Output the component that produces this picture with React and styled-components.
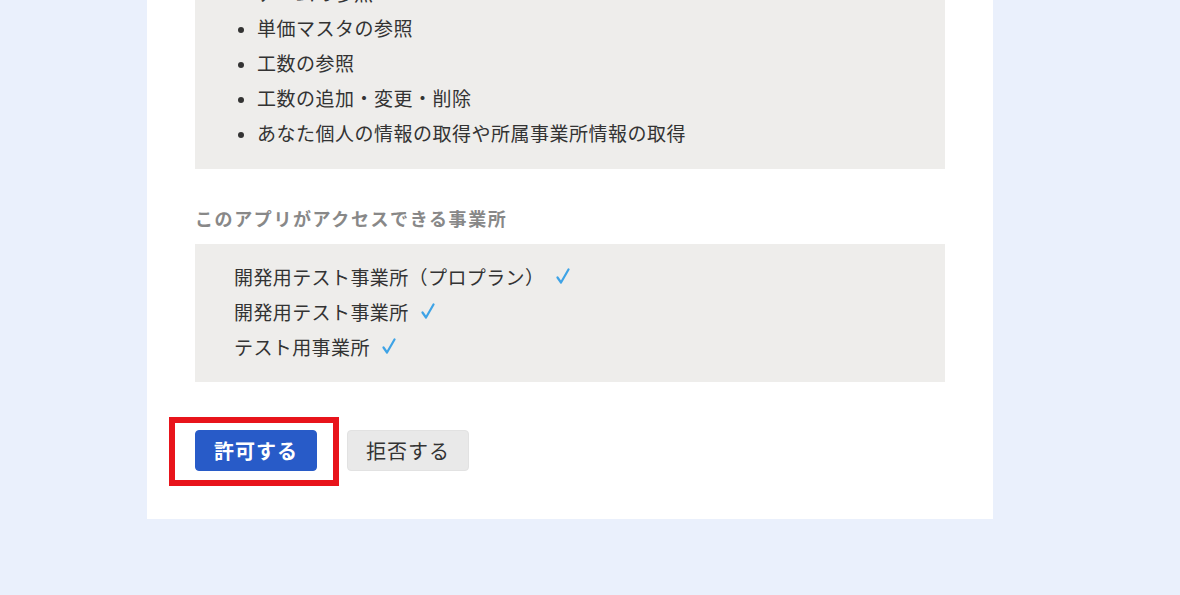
import React from "react";
import styled, { createGlobalStyle } from "styled-components";

const Global = createGlobalStyle`
  html, body {
    margin: 0;
    padding: 0;
    background: #eaf0fc;
  }
  body {
    font-family: "Noto Sans CJK JP", "Noto Sans", sans-serif;
    color: #333;
  }
`;

const Page = styled.div`
  min-height: 595px;
  overflow: hidden;
`;

const Card = styled.div`
  width: 846px;
  box-sizing: border-box;
  margin: -43px 0 0 147px;
  padding: 0 48px 48px;
  background: #fff;
`;

const GrayBox = styled.div`
  background: #eeedeb;
  padding: ${(p) => p.$pad};
`;

const BulletList = styled.ul`
  margin: 0;
  padding-left: 40px;
  list-style: disc;
`;

const Item = styled.li`
  font-size: 19px;
  line-height: 35px;
  letter-spacing: 0.5px;
  &::marker {
    font-size: 16px;
  }
`;

const Heading = styled.h3`
  margin: 35px 0 12px;
  font-size: 18px;
  line-height: 28px;
  font-weight: 700;
  color: #888;
  letter-spacing: 1.6px;
`;

const Office = styled.div`
  display: flex;
  align-items: center;
  font-size: 19px;
  line-height: 35px;
  letter-spacing: 0.4px;
`;

const Check = styled.svg`
  margin-left: ${(p) => p.$gap}px;
  width: 16px;
  height: 17px;
  flex: none;
`;

const ButtonRow = styled.div`
  display: flex;
  align-items: center;
  gap: 30px;
  margin-top: 48px;
`;

const Highlight = styled.div`
  position: relative;
  display: flex;
  &::before {
    content: "";
    position: absolute;
    left: -26px;
    top: -13px;
    right: -22px;
    bottom: -15px;
    border: 6px solid #e8141b;
    pointer-events: none;
  }
`;

const Button = styled.button`
  width: 122px;
  height: 41px;
  border-radius: 4px;
  font-family: "Noto Sans CJK JP", sans-serif;
  font-size: 20px;
  letter-spacing: 1px;
  cursor: pointer;
  padding: 0;
  border: 1px solid ${(p) => (p.$primary ? "#285bc8" : "#e2e2e2")};
  background: ${(p) => (p.$primary ? "#285bc8" : "#e9e9e9")};
  color: ${(p) => (p.$primary ? "#fff" : "#333")};
  font-weight: ${(p) => (p.$primary ? 700 : 400)};
`;

const CheckMark = ({ gap }) => (
  <Check $gap={gap} viewBox="0 0 16 17">
    <path
      d="M2.5 9.5 L6 14.5 L13.5 1.5"
      fill="none"
      stroke="#3ea3e6"
      strokeWidth="2.2"
      strokeLinecap="round"
      strokeLinejoin="round"
    />
  </Check>
);

const scopes = [
  "チームの参照",
  "単価マスタの参照",
  "工数の参照",
  "工数の追加・変更・削除",
  "あなた個人の情報の取得や所属事業所情報の取得",
];

const offices = [
  { name: "開発用テスト事業所（プロプラン）", gap: 11 },
  { name: "開発用テスト事業所", gap: 11 },
  { name: "テスト用事業所", gap: 11 },
];

export default function App() {
  return (
    <Page>
      <Global />
      <Card>
        <GrayBox $pad="18px 22px 19px">
          <BulletList>
            {scopes.map((s) => (
              <Item key={s}>{s}</Item>
            ))}
          </BulletList>
        </GrayBox>
        <Heading>このアプリがアクセスできる事業所</Heading>
        <GrayBox $pad="15px 39px 18px">
          {offices.map((o) => (
            <Office key={o.name}>
              {o.name}
              <CheckMark gap={o.gap} />
            </Office>
          ))}
        </GrayBox>
        <ButtonRow>
          <Highlight>
            <Button $primary>許可する</Button>
          </Highlight>
          <Button>拒否する</Button>
        </ButtonRow>
      </Card>
    </Page>
  );
}
